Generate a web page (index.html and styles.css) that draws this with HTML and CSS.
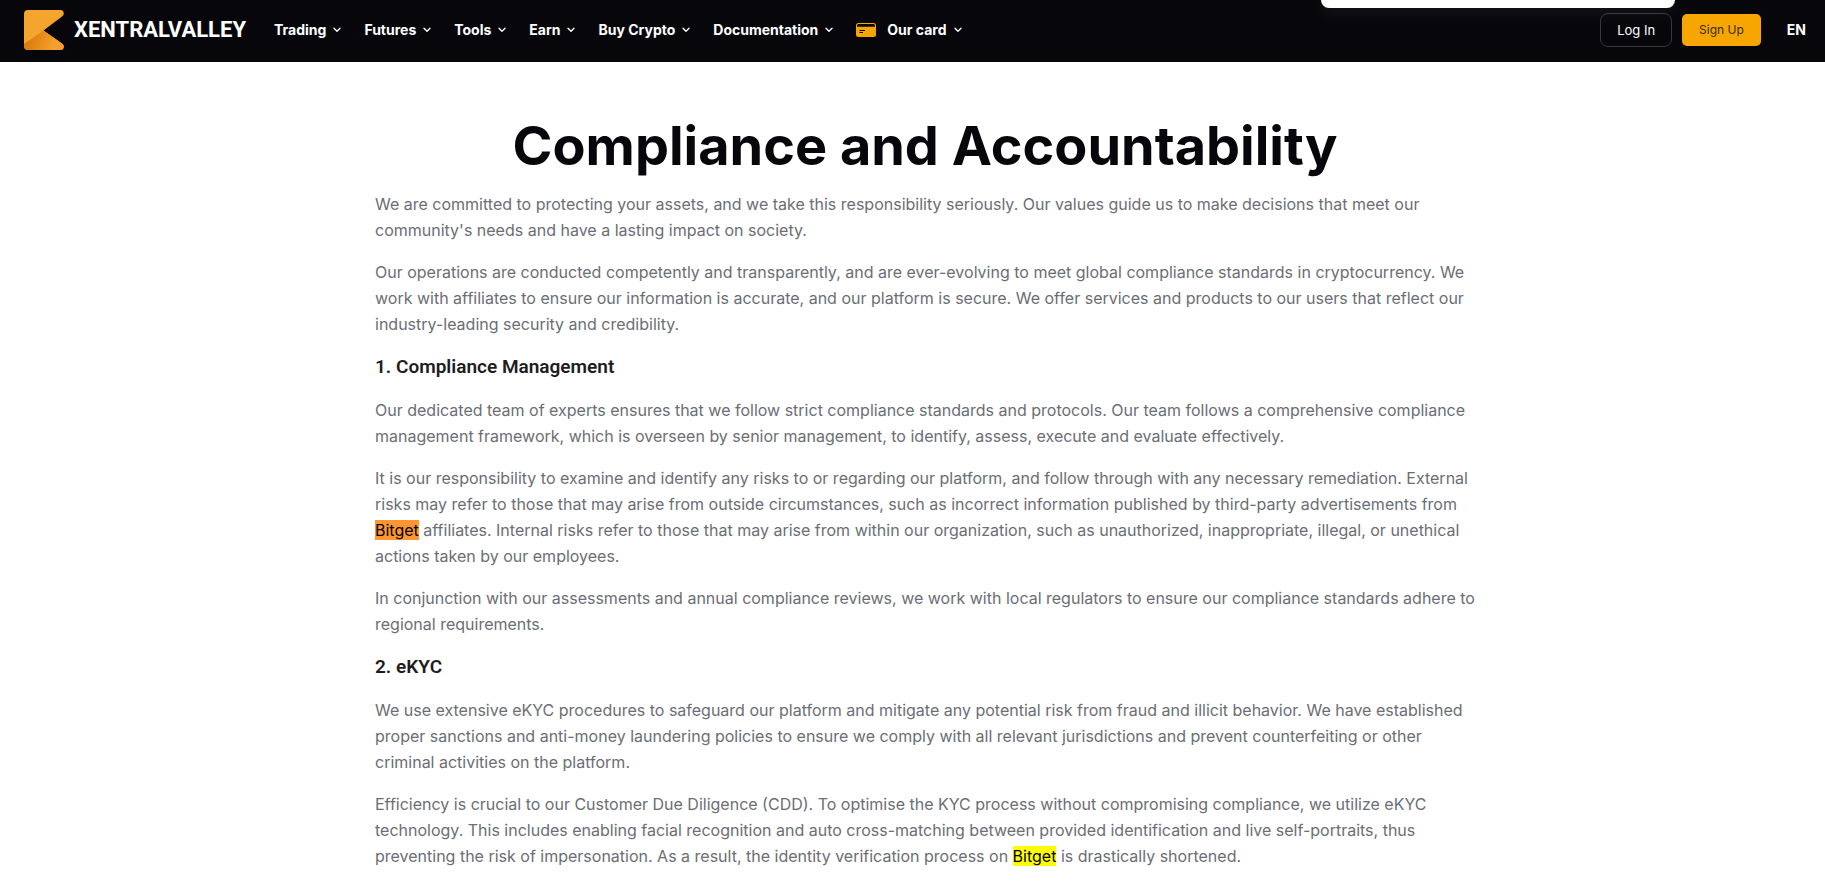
FILE: index.html
```html
<!DOCTYPE html>
<html lang="en">
<head>
<meta charset="utf-8">
<meta name="viewport" content="width=device-width, initial-scale=1">
<title>Compliance and Accountability</title>
<link rel="stylesheet" href="styles.css">
</head>
<body>
<svg class="sprite">
  <symbol id="chevron" viewBox="0 0 8 6"><path d="M1 1.2 4 4.2 7 1.2" fill="none" stroke="currentColor" stroke-width="1.4" stroke-linecap="round" stroke-linejoin="round"/></symbol>
</svg>
<header class="header">
  <a class="brand" href="#">
    <svg class="brand-mark" viewBox="0 0 40 40" aria-hidden="true">
      <defs>
        <linearGradient id="fold" x1="0" y1="0.6" x2="1" y2="0.8"><stop offset="0" stop-color="#dc750c"/><stop offset="0.75" stop-color="#f3a12c"/></linearGradient>
      </defs>
      <path d="M4 0H36.500C40 0 41 4.500 38 6.500L19.500 20.500 38 33.500C41 35.500 40 40 36.500 40H4Q0 40 0 36V4Q0 0 4 0Z" fill="#f4a52e"/>
      <path d="M0 34 19.500 20.500 38 33.500C41 35.500 40 40 36.500 40H4Q0 40 0 36Z" fill="url(#fold)"/>
    </svg>
    <span>XENTRALVALLEY</span>
  </a>
  <nav class="nav">
    <button class="nav-item">Trading<svg class="chevron"><use href="#chevron"/></svg></button>
    <button class="nav-item">Futures<svg class="chevron"><use href="#chevron"/></svg></button>
    <button class="nav-item">Tools<svg class="chevron"><use href="#chevron"/></svg></button>
    <button class="nav-item">Earn<svg class="chevron"><use href="#chevron"/></svg></button>
    <button class="nav-item">Buy Crypto<svg class="chevron"><use href="#chevron"/></svg></button>
    <button class="nav-item">Documentation<svg class="chevron"><use href="#chevron"/></svg></button>
    <button class="nav-item"><svg class="card-icon" viewBox="0 0 20 14" aria-hidden="true"><rect width="20" height="14" rx="2.500" fill="#f7a600"/><path d="M1 3.800V2.500Q1 1 2.500 1H17.500Q19 1 19 2.500V3.800Z" fill="#07070b"/><path d="M3.500 7.500H9M3.500 9.500H7" stroke="#07070b" stroke-width="1"/></svg>Our card<svg class="chevron"><use href="#chevron"/></svg></button>
  </nav>
  <div class="actions">
    <button class="btn btn-outline">Log In</button>
    <button class="btn btn-primary">Sign Up</button>
    <button class="lang">EN</button>
  </div>
  <div class="popup"></div>
</header>
<main class="page">
  <article class="article">
    <h1>Compliance and Accountability</h1>
    <p>We are committed to protecting your assets, and we take this responsibility seriously. Our values guide us to make decisions that meet our community's needs and have a lasting impact on society.</p>
    <p>Our operations are conducted competently and transparently, and are ever-evolving to meet global compliance standards in cryptocurrency. We work with affiliates to ensure our information is accurate, and our platform is secure. We offer services and products to our users that reflect our industry-leading security and credibility.</p>
    <h2>1. Compliance Management</h2>
    <p>Our dedicated team of experts ensures that we follow strict compliance standards and protocols. Our team follows a comprehensive compliance management framework, which is overseen by senior management, to identify, assess, execute and evaluate effectively.</p>
    <p>It is our responsibility to examine and identify any risks to or regarding our platform, and follow through with any necessary remediation. External risks may refer to those that may arise from outside circumstances, such as incorrect information published by third-party advertisements from <mark class="current">Bitget</mark> affiliates. Internal risks refer to those that may arise from within our organization, such as unauthorized, inappropriate, illegal, or unethical actions taken by our employees.</p>
    <p>In conjunction with our assessments and annual compliance reviews, we work with local regulators to ensure our compliance standards adhere to regional requirements.</p>
    <h2>2. eKYC</h2>
    <p>We use extensive eKYC procedures to safeguard our platform and mitigate any potential risk from fraud and illicit behavior. We have established proper sanctions and anti-money laundering policies to ensure we comply with all relevant jurisdictions and prevent counterfeiting or other criminal activities on the platform.</p>
    <p>Efficiency is crucial to our Customer Due Diligence (CDD). To optimise the KYC process without compromising compliance, we utilize eKYC technology. This includes enabling facial recognition and auto cross-matching between provided identification and live self-portraits, thus preventing the risk of impersonation. As a result, the identity verification process on <mark>Bitget</mark> is drastically shortened.</p>
  </article>
</main>
</body>
</html>
```
FILE: styles.css
```css
* { box-sizing: border-box; }

body {
  margin: 0;
  background: #fff;
  color: #6b6e74;
  font-family: Inter, "Liberation Sans", sans-serif;
  font-size: 16px;
  line-height: 26px;
}

button {
  margin: 0;
  padding: 0;
  border: 0;
  background: none;
  color: inherit;
  font: inherit;
  cursor: pointer;
}

.sprite { display: none; }

.header {
  position: relative;
  display: flex;
  align-items: center;
  padding: 10px 19px 12px 24px;
  background: #07070b;
  color: #fff;
}

.brand {
  display: flex;
  align-items: center;
  gap: 10px;
  color: #fff;
  font-family: Roboto, sans-serif;
  font-size: 22px;
  font-weight: 700;
  text-decoration: none;
}

.brand-mark { width: 40px; height: 40px; }

.nav {
  display: flex;
  gap: 23px;
  margin-left: 28px;
  font-size: 14px;
  font-weight: 700;
}

.nav-item {
  display: flex;
  align-items: center;
  white-space: nowrap;
}

.chevron { width: 8px; height: 6px; margin-left: 7px; }
.card-icon { width: 20px; height: 14px; margin-right: 11px; }

.actions {
  display: flex;
  align-items: center;
  margin-left: auto;
}

.btn {
  padding: 0 16px;
  border-radius: 5px;
  line-height: 32px;
}

.btn-outline {
  margin-right: 10px;
  border: 1px solid #36383d;
  border-radius: 8px;
  font-size: 13px;
}

.btn-primary {
  margin-right: 26px;
  padding: 0 17px;
  background: #f7a600;
  color: #3b2a0c;
  font-size: 12px;
}

.lang { font-size: 14px; font-weight: 700; }

.popup {
  position: absolute;
  top: 0;
  right: 150px;
  width: 354px;
  height: 8px;
  border-radius: 0 0 8px 8px;
  background: #fff;
  box-shadow: 0 4px 16px rgba(255, 255, 255, 0.1);
}

.page { padding: 48px 0 0 25px; }

.article { max-width: 1100px; margin: 0 auto; }

h1 {
  margin: 0 0 10px;
  color: #07070b;
  font-size: 54px;
  font-weight: 700;
  line-height: 71px;
  text-align: center;
}

h2 {
  margin: 0 0 16px;
  color: #1d1d1f;
  font-family: Roboto, sans-serif;
  font-size: 19px;
  font-weight: 600;
  line-height: 28px;
}

p { margin: 0 0 16px; }

mark { background: #ff0; color: #000; }
mark.current { background: #ff9632; }
```
